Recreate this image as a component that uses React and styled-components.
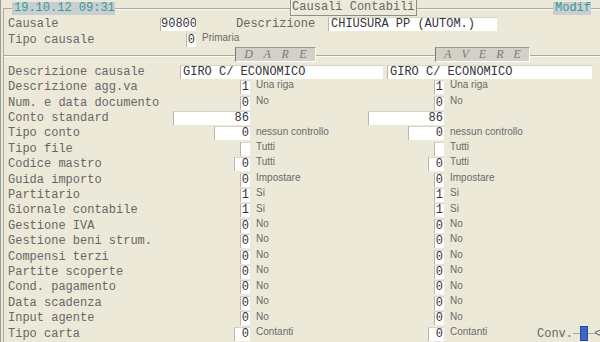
import React from 'react';
import styled, { createGlobalStyle } from 'styled-components';

const bg = '#ece9d8';
const lineColor = '#a9a8a4';
const labelColor = '#676767';
const inputColor = '#333333';
const hintColor = '#6a6a6a';
const teal = '#389a9a';
const chipBg = '#c9cfd1';
const mono = '"Liberation Mono", "DejaVu Sans Mono", monospace';
const sans = '"Liberation Sans", Arial, sans-serif';
const rowHeight = 15.42;

const GlobalStyle = createGlobalStyle`
  html, body {
    margin: 0;
    padding: 0;
    background: ${bg};
  }
  body {
    width: 600px;
    height: 342px;
    overflow: hidden;
    font-family: ${mono};
  }
`;

const Page = styled.div`
  width: 600px;
  height: 342px;
  box-sizing: border-box;
  border-left: 1px solid #9e9c95;
  display: flex;
  flex-direction: column;
  overflow: hidden;
`;

const TopBar = styled.div`
  display: flex;
  height: 16px;
  flex-shrink: 0;
`;

const Corner = styled.div`
  flex: 0 0 8px;
  margin-left: 2px;
  margin-top: 8px;
  border-top: 1px solid ${lineColor};
  border-left: 1px solid ${lineColor};
`;

const Line = styled.div`
  flex: ${p => (p.$w ? `0 0 ${p.$w}px` : '1')};
  align-self: flex-start;
  margin-top: ${p => p.$top || 8}px;
  height: 0;
  border-top: 1px solid ${lineColor};
  border-bottom: 1px solid #fbfaf4;
`;

const Chip = styled.div`
  flex: 0 0 ${p => p.$w}px;
  margin-top: 2px;
  height: 13px;
  background: ${chipBg};
  color: ${teal};
  font-size: 12px;
  line-height: 13px;
  padding-left: ${p => p.$pad || 2}px;
  box-sizing: border-box;
  white-space: nowrap;
`;

const TitleBox = styled.div`
  flex: 0 0 127px;
  height: 16px;
  box-sizing: border-box;
  border: 1px solid #8e8d88;
  border-top: none;
  box-shadow: inset 1px 0 #fff;
  color: ${labelColor};
  font-size: 12px;
  line-height: 15px;
  text-align: center;
  white-space: nowrap;
`;

const Frame = styled.div`
  flex: 1;
  margin-left: 2px;
  border-left: 1px solid ${lineColor};
  display: flex;
  flex-direction: column;
`;

const HeadRow = styled.div`
  display: flex;
  align-items: center;
  height: 16px;
  padding-left: 4px;
`;

const Label = styled.div`
  flex: 0 0 ${p => p.$w}px;
  color: ${labelColor};
  font-size: 12px;
  white-space: nowrap;
`;

const Slot = styled.div`
  flex: 0 0 ${p => p.$w}px;
  display: flex;
  justify-content: flex-end;
`;

const Input = styled.div`
  width: ${p => p.$w}px;
  height: 14px;
  box-sizing: border-box;
  background: #fff;
  border-left: 1px solid #b8b5aa;
  border-top: 1px solid #d6d3c7;
  color: ${inputColor};
  font-size: 12px;
  line-height: 13px;
  text-align: ${p => (p.$left ? 'left' : 'right')};
  padding: 0 ${p => (p.$left ? '0 0 2px' : '1px 0 0')};
  white-space: nowrap;
  overflow: hidden;
`;

const Hint = styled.div`
  flex: ${p => (p.$w ? `0 0 ${p.$w}px` : '1')};
  align-self: flex-start;
  padding-left: 6px;
  box-sizing: border-box;
  color: ${hintColor};
  font-family: ${sans};
  font-size: 10px;
  line-height: 12px;
  white-space: nowrap;
`;

const Separator = styled.div`
  display: flex;
  height: 16px;
  flex-shrink: 0;
  margin-top: -1px;
`;

const Legend = styled.div`
  flex: 0 0 ${p => p.$w}px;
  height: 15px;
  box-sizing: border-box;
  background: #d4d0c8;
  border-left: 1px solid #7c7b76;
  border-top: 1px solid #9a9993;
  border-right: 1px solid #fff;
  border-bottom: 1px solid #fff;
  display: flex;
  justify-content: space-around;
  align-items: center;
  padding: 0 3px;
  color: #7a7a7a;
  font-family: "Liberation Serif", serif;
  font-style: italic;
  font-size: 12px;
`;

const Rows = styled.div`
  display: flex;
  flex-direction: column;
  margin-top: 1px;
`;

const Row = styled.div`
  display: flex;
  align-items: center;
  height: ${rowHeight}px;
  padding-left: 4px;
`;

const Gap = styled.div`
  flex: 0 0 ${p => p.$w}px;
`;

const Conv = styled.div`
  display: flex;
  align-items: center;
  color: ${labelColor};
  font-size: 12px;
  white-space: nowrap;
`;

const Dash = styled.div`
  width: ${p => p.$w}px;
  height: 0;
  border-top: 1px solid ${lineColor};
`;

const Cursor = styled.div`
  width: 8px;
  height: 15px;
  box-sizing: border-box;
  background: #3a68c8;
  border: 1px solid #24499a;
`;

const rows = [
  ['Descrizione agg.va', ['1', 10, 'Una riga'], ['1', 10, 'Una riga']],
  ['Num. e data documento', ['0', 10, 'No'], ['0', 10, 'No']],
  ['Conto standard', ['86', 77, ''], ['86', 76, '']],
  ['Tipo conto', ['0', 36, 'nessun controllo'], ['0', 36, 'nessun controllo']],
  ['Tipo file', ['', 10, 'Tutti'], ['', 10, 'Tutti']],
  ['Codice mastro', ['0', 16, 'Tutti'], ['0', 16, 'Tutti']],
  ['Guida importo', ['0', 10, 'Impostare'], ['0', 10, 'Impostare']],
  ['Partitario', ['1', 10, 'Si'], ['1', 10, 'Si']],
  ['Giornale contabile', ['1', 10, 'Si'], ['1', 10, 'Si']],
  ['Gestione IVA', ['0', 10, 'No'], ['0', 10, 'No']],
  ['Gestione beni strum.', ['0', 10, 'No'], ['0', 10, 'No']],
  ['Compensi terzi', ['0', 10, 'No'], ['0', 10, 'No']],
  ['Partite scoperte', ['0', 10, 'No'], ['0', 10, 'No']],
  ['Cond. pagamento', ['0', 10, 'No'], ['0', 10, 'No']],
  ['Data scadenza', ['0', 10, 'No'], ['0', 10, 'No']],
  ['Input agente', ['0', 10, 'No'], ['0', 10, 'No']],
  ['Tipo carta', ['0', 16, 'Contanti'], ['0', 16, 'Contanti']],
];

const Letters = ({ text }) => (
  <>
    {text.split('').map((c, i) => (
      <span key={i}>{c}</span>
    ))}
  </>
);

export default function App() {
  return (
    <Page>
      <GlobalStyle />
      <TopBar>
        <Corner />
        <Chip $w={96}>19.10.12 09:31</Chip>
        <Line $w={175} />
        <TitleBox>Causali Contabili</TitleBox>
        <Line />
        <Chip $w={36} $pad={0}>Modif</Chip>
        <Line $w={9} />
      </TopBar>
      <Frame>
        <HeadRow>
          <Label $w={152}>Causale</Label>
          <Slot $w={36}><Input $w={36}>90800</Input></Slot>
          <Gap $w={40} />
          <Label $w={92}>Descrizione</Label>
          <Input $w={169} $left>CHIUSURA PP (AUTOM.)</Input>
        </HeadRow>
        <HeadRow>
          <Label $w={152}>Tipo causale</Label>
          <Slot $w={36}><Input $w={10}>0</Input></Slot>
          <Hint>Primaria</Hint>
        </HeadRow>
        <Separator>
          <Line $w={231} />
          <Legend $w={81}><Letters text="DARE" /></Legend>
          <Line $w={119} />
          <Legend $w={95}><Letters text="AVERE" /></Legend>
          <Line />
        </Separator>
        <Rows>
          <Row>
            <Label $w={165}>Descrizione causale</Label>
            <Gap $w={7} />
            <Input $w={203} $left>GIRO C/ ECONOMICO</Input>
            <Gap $w={4} />
            <Input $w={205} $left>GIRO C/ ECONOMICO</Input>
          </Row>
          {rows.map(([label, dare, avere], i) => {
            const last = i === rows.length - 1;
            return (
              <Row key={label}>
                <Label $w={165}>{label}</Label>
                <Slot $w={77}><Input $w={dare[1]}>{dare[0]}</Input></Slot>
                <Hint $w={118}>{dare[2]}</Hint>
                <Slot $w={76}><Input $w={avere[1]}>{avere[0]}</Input></Slot>
                <Hint $w={last ? 93 : 0}>{avere[2]}</Hint>
                {last && (
                  <Conv>
                    Conv.
                    <Dash $w={7} />
                    <Cursor />
                    <Dash $w={6} />
                    &lt;
                  </Conv>
                )}
              </Row>
            );
          })}
        </Rows>
      </Frame>
    </Page>
  );
}
